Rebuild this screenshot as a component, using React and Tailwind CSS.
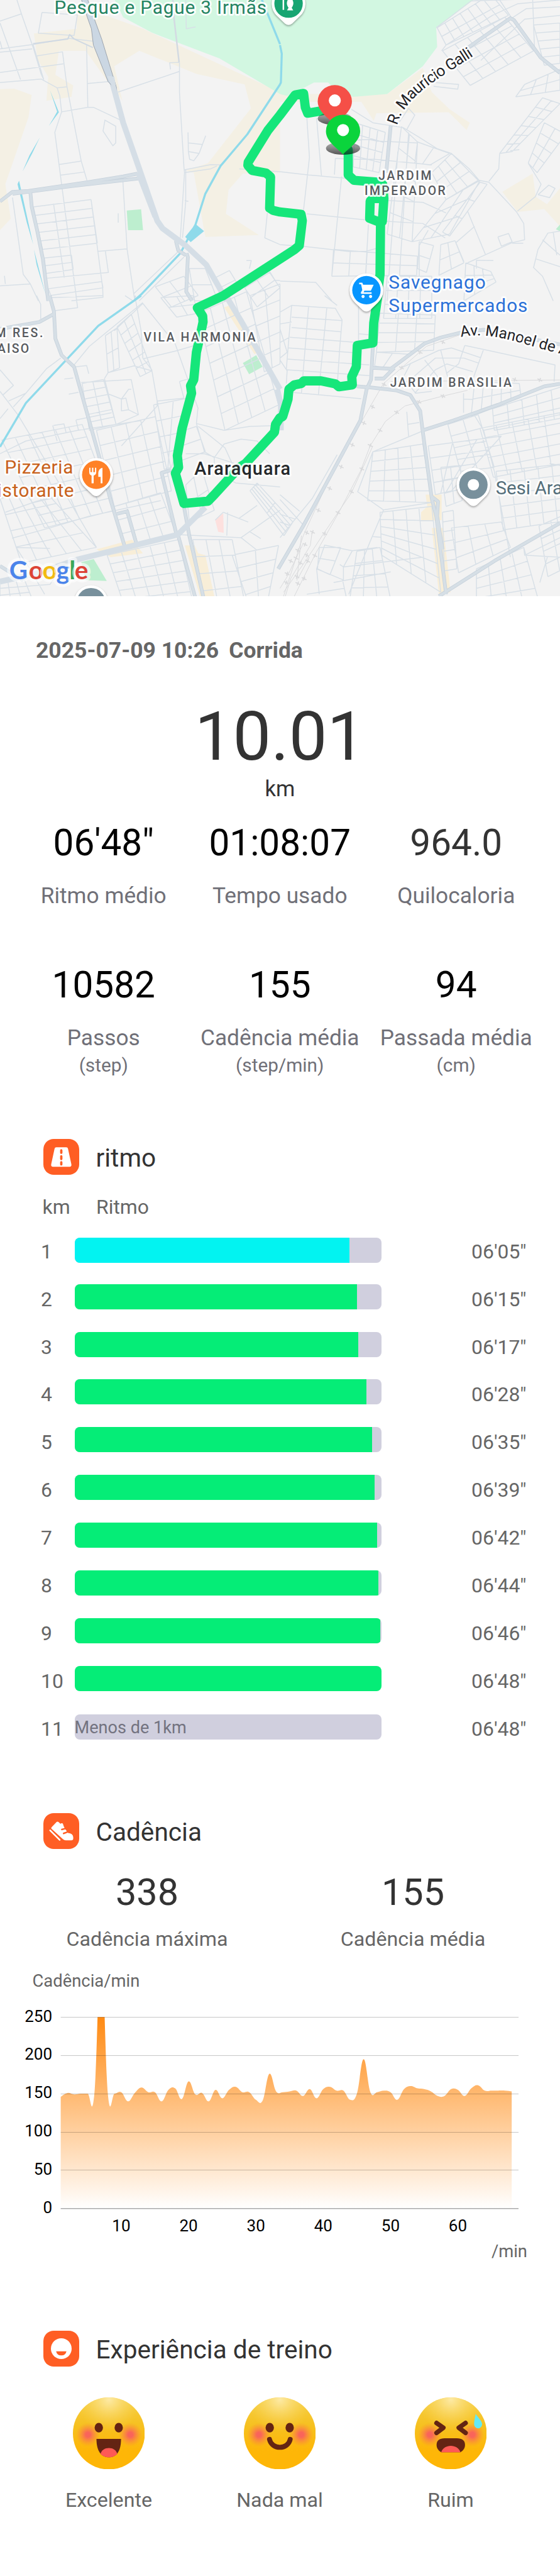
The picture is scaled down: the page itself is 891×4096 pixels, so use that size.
import React from "react";

/* ---------- map geometry ---------- */

// The map is described in four quadrants, each with its own local grid.
const QUADS = {
  a: [0, 0, 0.34439, 0.3699],
  b: [540, 0, 0.34439, 0.3699],
  c: [0, 570, 0.34439, 0.37628],
  d: [540, 570, 0.34439, 0.37628],
};

const toMap = (q, x, y) => {
  const [ox, oy, sx, sy] = QUADS[q];
  return [+(ox + x * sx).toFixed(1), +(oy + y * sy).toFixed(1)];
};

const points = (q, text) =>
  text
    .trim()
    .split(/\s+/)
    .map((p) => {
      const [x, y] = p.split(",").map(Number);
      return toMap(q, x, y).join(",");
    })
    .join(" L");

const line = (q, text) => "M" + points(q, text);
const lines = (q, list) => list.map((t) => line(q, t)).join(" ");

// Street block: p0 top-left, p1 top-right, p2 bottom-right, p3 bottom-left.
const grid = (q, [x0, y0, x1, y1, x2, y2, x3, y3], cols, rows) => {
  const at = (u, v) =>
    toMap(
      q,
      (1 - v) * ((1 - u) * x0 + u * x1) + v * ((1 - u) * x3 + u * x2),
      (1 - v) * ((1 - u) * y0 + u * y1) + v * ((1 - u) * y3 + u * y2)
    ).join(",");
  let d = "";
  for (let i = 0; i <= cols; i++) d += `M${at(i / cols, 0)} L${at(i / cols, 1)} `;
  for (let j = 0; j <= rows; j++) d += `M${at(0, j / rows)} L${at(1, j / rows)} `;
  return d;
};

const STREETS = [
  lines("a", [
    "0,110 120,72 95,0",
    "120,72 185,245 230,385 245,415",
    "235,65 433,78 415,185 215,173 235,65",
    "0,120 115,415",
    "0,215 12,255",
    "0,255 185,232 385,200 520,215",
    "0,272 180,255",
    "0,378 355,333",
    "0,430 230,412 320,458 375,452",
    "185,232 245,415",
    "205,292 350,270 375,450 455,840 487,940",
    "485,235 492,560",
    "492,435 607,425",
    "345,583 490,560 525,560 680,628",
    "320,458 335,500 345,583 307,690 345,960 430,1568",
    "333,857 452,840",
    "340,913 470,897",
    "585,625 648,658 648,745 632,760 577,683 588,625",
    "660,480 1003,373",
    "955,362 950,327 1003,325",
    "1005,325 1005,480 1030,870 1033,900 1010,1240",
    "1040,885 1040,1050 1022,1240",
    "1033,885 1180,858 1240,860",
    "1033,900 1180,880 1215,865",
    "1340,880 1568,895",
    "1053,690 1055,790 1062,830 1085,838 1115,800 1152,707",
    "1055,745 1132,753",
    "1055,790 1115,800",
    "1035,1045 1055,1050",
    "688,940 712,1300 755,1568",
    "545,1310 710,1297",
    "590,1310 607,1420 265,1450",
    "70,1030 130,1430 170,1480 215,1568",
    "0,1490 170,1480",
    "25,1438 30,1480",
    "662,1112 662,1160",
    "1000,1310 750,1530",
    "1030,1340 780,1568",
    "1040,0 1043,150 1095,140",
    "1497,1110 1483,1240 1568,1275",
    "1380,1358 1407,1358 1397,1400",
    "1510,1415 1540,1460 1568,1462",
    "510,1040 575,1500 577,1550 400,1568",
    "300,1062 360,1448",
  ]),
  grid("a", [187, 1078, 510, 1040, 545, 1268, 238, 1300], 1, 5),
  grid("a", [248, 1345, 400, 1330, 410, 1405, 258, 1425], 1, 2),
  grid("a", [270, 1505, 570, 1468, 577, 1500, 285, 1540], 1, 1),
  grid("a", [1060, 1400, 1150, 1400, 1220, 1568, 1090, 1568], 1, 2),
  grid("a", [870, 1495, 1030, 1440, 1110, 1540, 960, 1600], 2, 2),
  grid("a", [1190, 1455, 1285, 1410, 1350, 1510, 1250, 1555], 1, 2),
  grid("a", [1370, 1500, 1510, 1420, 1568, 1500, 1440, 1600], 2, 2),
  grid("b", [880, 145, 1180, -30, 1280, 80, 930, 235], 7, 2),
  grid("b", [910, 265, 1260, 90, 1420, 265, 1065, 445], 5, 4),
  grid("b", [1420, 130, 1568, 120, 1568, 330, 1480, 340], 1, 5),
  grid("b", [420, 640, 590, 690, 555, 900, 410, 870], 4, 4),
  grid("b", [680, 660, 770, 740, 740, 1260, 600, 1220], 2, 5),
  grid("b", [770, 740, 950, 800, 840, 860, 755, 850], 2, 1),
  grid("b", [850, 900, 960, 800, 1110, 940, 930, 1040], 3, 3),
  grid("b", [930, 1040, 1120, 940, 950, 1220, 740, 1260], 2, 3),
  grid("b", [1120, 950, 1160, 960, 950, 1230, 910, 1210], 1, 3),
  grid("b", [300, 1300, 770, 1335, 765, 1435, 290, 1440], 5, 2),
  grid("b", [780, 1260, 860, 1280, 820, 1420, 770, 1400], 1, 2),
  grid("b", [900, 1275, 980, 1255, 1030, 1370, 890, 1435], 2, 2),
  grid("b", [1040, 1370, 1180, 1415, 1210, 1470, 1030, 1568], 3, 3),
  grid("b", [600, 1440, 850, 1440, 850, 1660, 580, 1660], 4, 3),
  grid("b", [1370, 440, 1568, 360, 1568, 470, 1320, 505], 3, 2),
  grid("b", [1470, 510, 1568, 540, 1300, 790, 1230, 800], 2, 6),
  grid("b", [1480, 640, 1600, 700, 1440, 900, 1390, 850], 2, 4),
  lines("b", [
    "875,145 1070,5 1568,-10",
    "905,265 930,235 1190,80 1330,20 1568,0",
    "1060,240 1380,45 1568,35",
    "1230,0 1295,90",
    "1415,0 1425,250",
    "1125,315 1370,100 1568,80",
    "860,450 995,465 1000,440 870,430",
    "1065,445 1420,265",
    "400,570 520,640 690,665 770,710 880,775 960,800 1060,880 1115,940 1170,950",
    "650,660 720,565 755,600 710,675",
    "410,730 500,727 540,735 770,745",
    "150,610 165,820 130,1110",
    "205,615 232,915",
    "0,895 160,912 380,930",
    "310,825 400,830 530,830 850,860",
    "345,920 290,1440",
    "495,1170 480,1420",
    "310,825 305,910",
    "150,1115 500,1148 800,1165 925,1240",
    "600,1045 800,1055 930,1110",
    "660,790 600,1568",
    "720,690 670,1420",
    "0,1275 140,1285 380,1310 480,1310 540,1295",
    "0,1465 200,1472 290,1568",
    "1170,950 1325,1105 1365,1165 1370,1250 1300,1265 1050,1370",
    "1220,1235 1280,1217 1300,1260 1240,1283 1220,1235",
    "1300,1268 1362,1268",
    "1330,1100 1430,1025 1462,960 1390,850",
    "1445,1015 1505,965 1540,982 1510,1030 1445,1015",
    "1230,800 1225,880 1170,945",
    "1050,1100 1150,1325",
    "1090,1180 985,1265 1030,1365",
    "1568,1205 1500,1215 1445,1300 1420,1395 1470,1440 1530,1568",
    "1470,1250 1568,1330",
    "1435,1350 1568,1390",
    "1530,1210 1550,1330",
    "1100,1400 1100,1357 1195,1358",
    "1290,785 1340,780",
    "780,1440 780,1280 830,1200",
  ]),
  lines("c", [
    "205,0 228,45 228,120",
    "290,10 578,0",
    "300,78 435,62 425,0",
    "755,0 790,180 800,320 850,380 880,540 960,900",
    "800,35 500,260 415,355",
    "640,180 800,40 980,245 1110,580",
    "340,320 260,375 145,500 75,570",
    "0,380 75,460 15,510",
    "0,490 100,610 330,960 540,1290",
    "48,540 145,500",
    "0,630 45,580",
    "360,427 410,422",
    "425,365 485,358 497,400",
    "385,505 440,495",
    "455,445 735,430 775,610 650,660",
    "585,425 605,395 750,360 850,385",
    "585,425 650,660",
    "610,505 680,530 720,480 735,480",
    "680,530 705,525 720,585 680,590 680,530",
    "720,585 775,610",
    "425,637 440,690",
    "425,637 625,600",
    "300,665 358,657 370,700",
    "295,665 320,745",
    "0,810 145,745 435,690 790,640",
    "680,770 880,565 880,540 1030,525",
    "805,323 985,283 1110,250",
    "700,0 750,30 760,0",
    "1005,440 1080,420",
    "1005,440 1030,525",
    "1108,580 1100,655 1255,690 1400,670 1568,665",
    "1100,655 1145,800 1200,830 1255,760 1350,735 1440,745 1510,810",
    "1110,670 1260,780 1300,860",
    "1040,810 1145,810 1350,870",
    "1200,830 1200,900 1320,960 1568,980",
    "68,1243 280,1190 500,1130 900,1050",
    "30,1110 200,1055 420,1000",
    "90,1290 280,1295",
    "90,1290 160,1390 250,1530",
    "0,1500 280,1480 360,1370",
    "1010,1225 1350,1240 1568,1100",
    "1350,1240 1440,1305",
    "1250,1110 1390,1160",
    "1250,1110 1205,1150",
    "1275,1110 1270,1230",
    "1340,1140 1440,1075",
    "1400,1210 1460,1245",
  ]),
  grid("c", [655, 160, 735, 95, 850, 385, 785, 415], 2, 6),
  grid("c", [590, 205, 655, 165, 670, 370, 605, 395], 2, 2),
  grid("c", [460, 450, 580, 430, 650, 660, 500, 690], 2, 6),
  grid("c", [10, 740, 460, 660, 640, 1100, 250, 1190], 6, 7),
  grid("c", [0, 1040, 240, 990, 540, 1290, 120, 1370], 5, 4),
  grid("c", [540, 690, 870, 620, 960, 1000, 640, 1080], 4, 5),
  grid("c", [860, 560, 1080, 520, 960, 880, 920, 890], 2, 4),
  grid("c", [640, 1080, 900, 1010, 990, 1230, 700, 1290], 4, 3),
  grid("c", [600, 1330, 1000, 1250, 1080, 1570, 700, 1600], 5, 6),
  grid("c", [1110, 90, 1380, -20, 1560, 560, 1260, 690], 4, 7),
  grid("c", [900, 10, 1080, 0, 1110, 90, 990, 110], 2, 2),
  grid("c", [1400, 0, 1568, -60, 1568, 350, 1480, 390], 2, 5),
  grid("c", [1080, 1250, 1300, 1250, 1370, 1570, 1150, 1600], 3, 4),
  grid("c", [1300, 1330, 1560, 1280, 1500, 1560, 1400, 1600], 2, 4),
  grid("c", [1400, 1000, 1440, 960, 1640, 1160, 1590, 1230], 4, 2),
  grid("c", [1000, 700, 1100, 670, 1150, 800, 1000, 850], 1, 2),
  grid("c", [1040, 970, 1130, 890, 1200, 1100, 1060, 1160], 2, 2),
  grid("c", [0, 1470, 130, 1440, 200, 1600, 0, 1600], 3, 2),
  lines("d", [
    "0,85 65,50 230,60 310,65 348,125 335,260 320,470",
    "65,50 35,380",
    "160,55 120,500",
    "262,65 215,510",
    "65,110 348,128",
    "65,163 340,185",
    "55,213 430,240",
    "48,268 410,292",
    "43,325 500,355",
    "38,380 500,410",
    "60,495 455,528",
    "0,145 65,135",
    "0,240 50,215",
    "0,170 40,290 0,320",
    "0,330 40,385 35,450",
    "440,40 440,230",
    "440,195 495,200",
    "320,50 250,0",
    "1035,255 1540,355 1535,440",
    "1035,255 1000,350 930,400",
    "1140,275 1060,480",
    "680,370 890,280 960,268 1125,318",
    "705,450 870,320 1030,320 1110,345",
    "755,500 870,380 935,350 1080,390",
    "810,330 905,440",
    "730,350 690,420 760,500 850,490",
    "900,280 940,420",
    "710,595 720,720",
    "715,660 780,650",
    "795,695 520,800 435,1005 580,1098 505,1260 385,1530",
    "580,1098 850,1060",
    "205,1400 250,1278 405,1307 545,1290",
    "205,1400 220,1530",
    "205,1400 350,1455 370,1540",
    "355,1390 405,1307",
    "335,1378 355,1390 355,1460",
    "355,1390 800,1340",
    "300,1470 620,1415",
    "1028,600 1028,500",
    "1028,530 1080,532",
    "1080,600 1140,690 1200,900 1290,1340",
    "1140,690 1568,610",
    "520,1235 565,1238",
    "0,1020 110,1105",
    "0,1045 130,1175",
    "0,1240 180,1040 320,815",
    "0,1160 60,1180",
    "0,1120 85,1145",
    "1365,1290 1370,1330 1568,1340",
    "1370,1330 1568,1240",
    "1497,1340 1455,1470",
    "150,1530 360,1500",
    "1568,870 1510,860",
  ]),
  grid("d", [560, 90, 870, 100, 860, 280, 540, 290], 3, 4),
  grid("d", [540, 290, 720, 300, 620, 380, 530, 360], 2, 1),
  grid("d", [520, 800, 800, 760, 850, 1060, 490, 1050], 4, 5),
  grid("d", [830, 770, 1240, 720, 960, 1000, 870, 1020], 3, 4),
  grid("d", [560, 1110, 850, 1080, 900, 1520, 570, 1330], 4, 6),
  grid("d", [430, 1310, 560, 1290, 620, 1560, 390, 1560], 3, 4),
  grid("d", [940, 660, 1110, 610, 1200, 880, 1010, 900], 2, 4),
  grid("d", [1120, 680, 1568, 600, 1600, 860, 1195, 930], 5, 5),
  grid("d", [1190, 580, 1600, 460, 1620, 620, 1200, 690], 5, 3),
  grid("d", [1090, 440, 1340, 450, 1350, 520, 1070, 620], 5, 2),
  grid("d", [1210, 900, 1600, 860, 1630, 1150, 1250, 1200], 5, 5),
  grid("d", [900, 880, 1010, 870, 1020, 1050, 930, 1080], 2, 3),
  grid("d", [910, 1110, 970, 1100, 990, 1400, 920, 1410], 1, 6),
  grid("d", [960, 1190, 1240, 1160, 1290, 1290, 1000, 1420], 3, 3),
  grid("d", [1100, 1400, 1365, 1290, 1450, 1570, 1100, 1600], 4, 4),
  grid("d", [1450, 1180, 1650, 1100, 1700, 1350, 1500, 1440], 3, 4),
  grid("d", [220, 1290, 340, 1290, 280, 1430, 210, 1400], 1, 2),
];

const ROADS_MEDIUM = [
  lines("a", [
    "170,1000 178,1080 208,1200 240,1350 270,1568",
    "0,1050 70,1000 160,995 490,950 690,920 770,905",
    "70,1010 400,970 780,930",
    "985,1255 998,1305 1040,1330",
    "1045,1320 1052,1340 1043,1520 1075,1568",
  ]),
  lines("b", ["1050,250 1290,95 1310,105 1460,300 1568,380", "620,655 595,900"]),
  lines("c", [
    "278,0 302,80 310,220 345,305 415,365 560,840 620,1050 700,1290",
    "0,170 130,150 220,135 300,95",
    "655,1118 712,1105 765,1275",
    "990,1230 905,908 955,895",
    "995,1220 1100,1568",
    "1030,1080 1060,1230 1145,1568",
    "0,1385 130,1460",
  ]),
  lines("d", [
    "520,260 510,430 485,480 450,640 320,860 130,1180 -10,1400",
    "430,465 500,470 650,485 730,510 785,590 800,700 850,1040 875,1130 930,1530",
    "520,370 620,375 810,245 900,215 1010,190 1140,175 1568,250",
    "530,425 580,425 640,370",
    "800,690 970,640 1220,560 1480,465 1568,452",
    "850,1030 885,1055 880,1130 910,1300",
    "890,1540 1200,1360 1568,1165",
  ]),
].join(" ");

const ROADS_MAJOR = [
  line("a", "620,400 690,640 780,880 880,1150 910,1190 1040,1280 1155,1380 1270,1568"),
  line("a", "775,900 870,1130"),
  line("c", "1265,0 1350,130 1450,290 1568,480"),
  line("c", "0,1465 200,1425 440,1350 995,1225 1150,1085"),
  line("d", "-15,480 5,560 5,690"),
].join(" ");

const RIVER = [
  line("a", "1465,-5 1568,230"),
  line("b", "0,235 10,280 5,430 0,440"),
  line("a", "1568,440 1385,700 1235,865 1150,1010 1095,1170 1010,1320 790,1535 750,1568"),
  line("c", "790,0 550,155 370,330 145,550 0,775"),
].join(" ");

const FARMLAND = [
  line("a", "430,60 530,60 800,150 1568,480 1568,900 1360,905 1280,990 1265,1115 1450,1225 1150,1235 1085,900 1040,890 1165,850 1405,565 1370,440 1100,385 780,265 640,345 685,525 655,480 600,420 480,265 330,265 310,390 410,445 400,505 260,525 270,400 210,310 190,175 430,150"),
  line("a", "0,465 80,462 177,495 160,610 30,960 60,1140 0,1200"),
  line("b", "0,490 600,490 800,355 850,480 950,570 1063,640 1045,678 945,585 540,590 525,630 455,530 0,530"),
  line("b", "1245,1000 1415,905 1432,1025 1495,1065 1568,980 1568,1180 1480,1090 1330,1105"),
].join("Z ") + "Z";

const FOREST =
  line("a", "640,-5 690,90 850,170 1230,305 1568,490") +
  " L" +
  points("b", "40,500 150,450 190,430 270,430 310,470 410,505 600,490 800,345 880,245 875,145 1090,-5") +
  "Z";

const SHOPS = [
  line("c", "1255,60 1300,45 1465,280 1425,300"),
  line("c", "540,1300 740,1250 800,1320 620,1340"),
  line("c", "1035,1280 1090,1280 1110,1320 1150,1330 1200,1540 1120,1540"),
  line("d", "815,1020 905,1020 905,1150 790,1155 790,1110 825,1080"),
  line("d", "850,1190 915,1190 955,1520 890,1530"),
].join("Z ") + "Z";

const PARKS = [
  line("a", "710,1097 790,1091 801,1200 717,1200"),
  line("c", "1360,345 1435,305 1470,365 1395,403"),
  line("c", "455,1365 525,1350 598,1462 480,1458"),
  line("b", "1545,1195 1568,1170 1568,1205"),
].join("Z ") + "Z";

const POND = line("a", "1095,1168 1143,1205 1068,1262 1037,1235") + "Z";

const CREEKS = [
  line("a", "280,470 330,585 273,657 300,615 320,582"),
  line("a", "223,716 165,810 126,894 180,800"),
  line("a", "107,942 186,1275 150,1160 98,960"),
  line("a", "190,1300 255,1535 205,1380"),
].join("Z ") + "Z";

const RAILS = lines("d", [
  "1010,200 820,260 580,450 460,640 260,970 130,1230 20,1540",
  "1050,485 910,515 700,565 590,645 505,770 450,900 330,1110 200,1320 80,1540",
  "520,770 400,1010 240,1225 150,1350 20,1520",
  "130,1270 40,1440 0,1500",
  "180,1210 170,1280 60,1450 30,1540",
  "165,1340 100,1450",
  "120,1230 95,1460",
  "620,440 1568,432",
]);

const SLEEPERS = [
  [912, 238], [785, 290], [680, 370], [583, 455], [518, 570], [470, 653], [405, 765], [343, 877], [278, 988],
  [215, 1100], [150, 1215], [778, 545], [912, 515], [653, 598], [560, 690], [505, 768], [458, 888], [400, 1005],
  [325, 1112], [250, 1220], [182, 1212], [140, 1275], [100, 1305], [150, 1330], [195, 1332], [60, 1360], [90, 1345],
  [155, 1360], [115, 1370], [40, 1425], [95, 1440], [135, 1450], [35, 1470], [100, 1475], [1315, 430], [1455, 432],
]
  .map(([x, y]) => line("d", `${x - 13},${y - 6} ${x + 13},${y + 6} ${x},${y} ${x + 4},${y - 10} ${x - 4},${y + 10}`))
  .join(" ");

const ROUTE =
  "M" +
  [
    points("b", "250,575 155,590 142,560 132,487 85,495 0,600"),
    points("a", "1500,680 1390,845 1388,862 1412,888 1490,902 1515,922 1510,1085 1530,1097"),
    points("b", "0,1105 118,1117 125,1150 108,1280 80,1302 0,1350"),
    points("c", "1250,0 1105,62 1135,105 1137,135 1122,200 1100,290 1085,430 1067,462 1073,500 1020,680 993,820 1000,880 982,910 1030,1065 1165,1053 1200,1020 1340,880 1375,860 1537,700 1543,660 1568,625"),
    points("d", "15,620 45,530 50,480 80,457 120,450 132,437 230,437 310,452 330,467 405,457 402,415 427,365 433,255 520,242 525,140 548,0"),
    points("b", "548,1520 560,1430 563,1160 502,1138 505,1048 522,1035 582,1035 573,1155 582,1035 575,960 555,950 415,940 382,912 382,780"),
  ].join(" L");

/* ---------- map pieces ---------- */

function FlagPin({ x, y, color }) {
  return (
    <g transform={`translate(${x} ${y})`}>
      <ellipse cx="0" cy="32" rx="33" ry="12.5" fill="url(#pinShade)" />
      <path d="M0 44 C-8 34 -33 20 -33 -1 A33 31.5 0 0 1 33 -1 C33 20 8 34 0 44Z" fill={color} />
      <circle cx="0" cy="-3" r="11.6" fill="#fff" />
    </g>
  );
}

function PlacePin({ x, y, color, children }) {
  return (
    <g transform={`translate(${x} ${y})`}>
      <path
        d="M-22 24 A32.5 32.5 0 1 1 22 24 L7 38.5 Q0 44 -7 38.5Z"
        fill="#fff"
        style={{ filter: "drop-shadow(0 2px 2px rgba(0,0,0,.35))" }}
      />
      <circle r="27.4" fill={color} />
      {children}
    </g>
  );
}

function Halo({ children, ...rest }) {
  return (
    <text
      stroke="#ffffff"
      strokeWidth="7"
      strokeOpacity="0.9"
      strokeLinejoin="round"
      style={{ paintOrder: "stroke" }}
      {...rest}
    >
      {children}
    </text>
  );
}

function RouteMap() {
  return (
    <svg className="block h-[948px] w-full" viewBox="0 0 1080 1149.5" preserveAspectRatio="none" fontFamily="Roboto, sans-serif">
      <defs>
        <linearGradient id="pinShade" x1="0" y1="0" x2="0" y2="1">
          <stop offset="0" stopColor="#000" stopOpacity="0.25" />
          <stop offset="1" stopColor="#000" stopOpacity="0.65" />
        </linearGradient>
        <path id="galli" d="M766 242 C773 213 799 184 830 162 S880 130 925 100" />
        <path id="manoel" d="M889 650 C930 641 975 652 1025 667 S1080 680 1130 696" />
      </defs>
      <rect width="1080" height="1150" fill="#f3f3f3" />
      <path d={FARMLAND} fill="#f4f0e4" />
      <path d={FOREST} fill="#d2f7e1" />
      <path d={SHOPS} fill="#f8eed8" />
      <path d={PARKS} fill="#bdeecf" />
      <path d={line("c", "1205,1150 1250,1115 1253,1215 1222,1210") + "Z"} fill="#fde0de" />
      <g fill="none" stroke="#d8e0e7" strokeLinejoin="round">
        <path d={STREETS.join(" ")} strokeWidth="1.8" />
        <path d={line("a", "968,0 975,100 1003,325")} strokeWidth="3" stroke="#d3dae2" />
        <path d={line("a", "185,228 380,203 390,180 415,203 520,248")} strokeWidth="2.4" stroke="#d0d9e3" />
      </g>
      <g fill="none" stroke="#d9dadc" strokeWidth="1.2">
        <path d={RAILS} />
        <path d={SLEEPERS} strokeWidth="2" />
      </g>
      <path d={RIVER} fill="none" stroke="#8fdaea" strokeWidth="4" strokeLinejoin="round" />
      <path d={POND} fill="#8fdaea" />
      <path d={CREEKS} fill="#8fdaea" />
      <g fill="none" strokeLinejoin="round">
        <path d={ROADS_MEDIUM} stroke="#c6d1db" strokeWidth="7" />
        <path d={ROADS_MEDIUM} stroke="#d6dfe6" strokeWidth="5" />
        <path d={ROADS_MAJOR} stroke="#d5dee6" strokeWidth="11" />
      </g>
      <path
        d={line("a", "455,-5 487,85 512,150 523,235 605,425 650,470 652,455 570,205 525,90 490,-5") + "Z"}
        fill="#cbd7e3"
        stroke="#8f98a3"
        strokeWidth="1"
      />
      <path d={line("a", "600,395 640,480 668,560 640,400") + "Z"} fill="#d5dee6" />

      <path d={ROUTE} fill="none" stroke="#16e67a" strokeWidth="17.8" strokeLinejoin="round" strokeLinecap="round" />

      <g fontWeight="500" fontSize="23.5" fill="#56595d">
        <Halo x="730" y="347" textLength="102">JARDIM</Halo>
        <Halo x="703" y="376" textLength="156">IMPERADOR</Halo>
        <Halo x="277" y="659" textLength="216">VILA HARMONIA</Halo>
        <Halo x="752.5" y="746" textLength="234">JARDIM BRASILIA</Halo>
        <Halo x="-9" y="650.5" textLength="92">M RES.</Halo>
        <Halo x="-5" y="680" textLength="61">AISO</Halo>
      </g>
      <g fill="#1f2226">
        <Halo fontSize="30">
          <textPath href="#galli" textLength="204">R. Maurício Galli</textPath>
        </Halo>
        <Halo fontSize="29.5">
          <textPath href="#manoel">Av. Manoel de Abreu</textPath>
        </Halo>
      </g>

      <FlagPin x={645.7} y={196.6} color="#f54f47" />
      <FlagPin x={661.6} y={253.8} color="#0bd43c" />

      <PlacePin x={556.5} y={7} color="#18a572">
        <path d="M-10 -10V12" stroke="#fff" strokeWidth="3" />
        <path d="M3 -12 C9 -8 12 0 6 8 L9 13 H-3 L0 8 C-6 0 -3 -8 3 -12Z" fill="#fff" />
      </PlacePin>
      <PlacePin x={706.7} y={559.5} color="#0896ff">
        <path d="M-14 -14.5 h6 l1.6 4 H14 l-5.5 11.5 H-4 l-1.5 3 H10 v3.2 H-9 q-3 -1.2 -1 -4.2 l2 -3.2 L-10.3 -11.3 H-14Z" fill="#fff" />
        <circle cx="-6.5" cy="12.3" r="3" fill="#fff" />
        <circle cx="8" cy="12.3" r="3" fill="#fff" />
      </PlacePin>
      <PlacePin x={185.6} y={915.4} color="#ff8127">
        <path
          d="M-13.5 -13.5 V-5 Q-13.5 0 -9 1.5 V16.5 H-5 V1.5 Q0 0 0 -5 V-13.5 H-2.4 V-5 H-5.6 V-13.5 H-8.2 V-5 H-11.2 V-13.5Z M12 -13.5 V16.5 H8.5 V4 H4 V-4 Q5 -12 12 -13.5Z"
          fill="#fff"
        />
      </PlacePin>
      <PlacePin x={913} y={934.6} color="#78909c">
        <circle r="11" fill="#fff" />
      </PlacePin>
      <PlacePin x={175.6} y={1161} color="#78909c" />

      <g fontSize="36">
        <Halo x="105" y="26.5" fill="#258462" textLength="409">Pesque e Pague 3 Irmãs</Halo>
        <Halo x="749.5" y="557" fill="#2b71d8" textLength="187">Savegnago</Halo>
        <Halo x="749.5" y="602" fill="#2b71d8" textLength="268">Supermercados</Halo>
        <Halo x="9" y="912.5" fill="#c8611b" textLength="132">Pizzeria</Halo>
        <Halo x="-5.5" y="957.5" fill="#c8611b" textLength="148">istorante</Halo>
        <Halo x="956" y="953.5" fill="#546e7a" textLength="249">Sesi Araraquara</Halo>
        <Halo x="375" y="916" fill="#25282b" fontWeight="500" fontSize="35" textLength="185">Araraquara</Halo>
      </g>

      <g fontFamily="Lato, sans-serif" fontSize="49" fontWeight="700">
        <Halo x="18 55.5 81.8 108.5 133.5 144" y="1116.5" strokeWidth="12" strokeOpacity="0.6" fill="#4b84ea">
          <tspan>G</tspan>
          <tspan fill="#dc4437">o</tspan>
          <tspan fill="#f2bb12">o</tspan>
          <tspan>g</tspan>
          <tspan fill="#3da658">l</tspan>
          <tspan fill="#dc4437">e</tspan>
        </Halo>
      </g>
    </svg>
  );
}

/* ---------- summary ---------- */

function Stat({ value, label, unit, tone = "text-black" }) {
  return (
    <div className="flex flex-col items-center whitespace-nowrap">
      <div className={`h-[70px] text-[58.5px] leading-[70px] ${tone}`}>{value}</div>
      <div className="mt-[27px] h-[44px] text-[35.3px] leading-[44px] text-[#707078]">{label}</div>
      {unit && <div className="mt-1 h-[36px] text-[29.8px] leading-[36px] text-[#707078]">{unit}</div>}
    </div>
  );
}

function SectionTitle({ icon, children }) {
  return (
    <div className="flex h-[57px] items-start pl-[69px]">
      <svg className="block size-[57px]" viewBox="0 0 69 69">
        <rect width="69" height="69" rx="20" fill="#ff5e24" />
        {icon}
      </svg>
      <h2 className="ml-[26.5px] text-[40.6px] leading-[60px] text-[#333]">{children}</h2>
    </div>
  );
}

const roadIcon = (
  <g>
    <path d="M25 16 H44 Q47 16 47.5 19 L54 49 Q54.5 53.5 50.5 53.5 H18.5 Q14.5 53.5 15 49 L21.5 19 Q22 16 25 16Z" fill="#fff" />
    <path d="M34.5 22v4.5 M34.5 33.5v5 M34.5 45v4" stroke="#ff5e24" strokeWidth="4.5" strokeLinecap="round" />
  </g>
);

const shoeIcon = (
  <g>
    <path
      d="M16 27 L25.5 17 Q27 15.5 29 17 L33 20.5 Q35 18.5 37.5 20 L39.5 26 L42 30.5 L47.5 38 Q57 39 57.5 46 V50 Q57 52.5 54 52.5 H43 Q40 52.5 37.5 50 L15.5 30 Q14.5 28.5 16 27Z"
      fill="#fff"
    />
    <path d="M13 33 L31.5 51.5" stroke="#fff" strokeWidth="3" strokeLinecap="round" />
    <path d="M35.5 31.5 L43 29.5 M39 39 L46 36.5" stroke="#ff5e24" strokeWidth="3" strokeLinecap="round" />
  </g>
);

const smileIcon = (
  <g>
    <circle cx="34.5" cy="34.5" r="20" fill="#fff" />
    <path d="M24.5 39.5 H44.5 Q42.5 47.5 34.5 47.5 T24.5 39.5Z" fill="#ff5e24" />
  </g>
);

/* ---------- pace ---------- */

const SPLITS = [
  ["1", "06'05\""],
  ["2", "06'15\""],
  ["3", "06'17\""],
  ["4", "06'28\""],
  ["5", "06'35\""],
  ["6", "06'39\""],
  ["7", "06'42\""],
  ["8", "06'44\""],
  ["9", "06'46\""],
  ["10", "06'48\""],
  ["11", "06'48\"", "Menos de 1km"],
];
const SLOWEST = 408;
const seconds = (pace) => Number(pace.slice(0, 2)) * 60 + Number(pace.slice(3, 5));

function SplitRow({ km, pace, note, first }) {
  return (
    <div className="flex h-[75.9px] items-start pl-[65px] text-[31.9px] leading-[40px] text-[#666]">
      <div className="mt-[30.8px] w-[53.6px]">{km}</div>
      <div
        className={`${first ? "mt-[28.8px]" : note ? "mt-[28.2px]" : "mt-[26.8px]"} h-[40px] w-[488.5px] overflow-hidden rounded-[8px] bg-[#d0cfde]`}
      >
        {note ? (
          <div className="text-[27.1px] leading-[42px] text-[#737380]">{note}</div>
        ) : (
          <div
            className={`h-full ${first ? "bg-[#02f3f1]" : "bg-[#05ed77]"}`}
            style={{ width: `${(seconds(pace) / SLOWEST) * 100}%` }}
          />
        )}
      </div>
      <div className="mt-[30.8px] ml-[143px]">{pace}</div>
    </div>
  );
}

/* ---------- cadence chart ---------- */

const CADENCE = [
  146, 151, 149, 150, 150, 150, 338, 150, 150, 152, 140, 151, 158, 152, 152, 140, 155, 157, 143, 166, 149, 151, 140,
  155, 144, 155, 159, 152, 152, 142, 141, 176, 153, 152, 153, 154, 147, 156, 144, 156, 159, 154, 154, 142, 150, 195,
  152, 152, 154, 152, 142, 156, 160, 157, 156, 153, 147, 147, 156, 155, 147, 157, 161, 154, 154, 154, 154, 153,
];
const X0 = 96.6;
const XSTEP = 10.71;
const Y0 = 343.8;
const YUNIT = 1.218;

const curve = () => {
  const p = CADENCE.map((v, i) => [X0 + i * XSTEP, Y0 - v * YUNIT]);
  const at = (i) => p[Math.max(0, Math.min(p.length - 1, i))];
  let d = `M${X0} ${Y0} L${p[0][0]} ${p[0][1]}`;
  for (let i = 1; i < p.length; i++) {
    const [pp, a, b, n] = [at(i - 2), at(i - 1), at(i), at(i + 1)];
    const k = 0.2;
    d += ` C${a[0] + (b[0] - pp[0]) * k} ${a[1] + (b[1] - pp[1]) * k} ${b[0] - (n[0] - a[0]) * k} ${b[1] - (n[1] - a[1]) * k} ${b[0]} ${b[1]}`;
  }
  return d + ` L${p[p.length - 1][0]} ${Y0}Z`;
};

function CadenceChart() {
  return (
    <svg className="block h-[440px] w-full" viewBox="0 0 891 440" fontFamily="Roboto, sans-serif" fontSize="26">
      <defs>
        <linearGradient id="cadFill" gradientUnits="userSpaceOnUse" x1="0" y1="39.3" x2="0" y2="343.8">
          <stop offset="0" stopColor="#ff8a12" />
          <stop offset="1" stopColor="#ffffff" />
        </linearGradient>
        <clipPath id="cadClip">
          <rect x="90" y="39.3" width="740" height="310" />
        </clipPath>
      </defs>
      <path d={curve()} fill="url(#cadFill)" clipPath="url(#cadClip)" />
      {[250, 200, 150, 100, 50].map((v) => (
        <path key={v} d={`M${X0} ${Math.floor(Y0 - v * YUNIT) + 0.5}H825`} stroke="#000" strokeOpacity="0.22" strokeWidth="1" />
      ))}
      <path d={`M${X0} 343.8H825`} stroke="#a9a9a9" strokeWidth="1.5" />
      {[250, 200, 150, 100, 50, 0].map((v) => (
        <text key={v} x="83" y={Y0 - v * YUNIT + 7.2} textAnchor="end">
          {v}
        </text>
      ))}
      {[10, 20, 30, 40, 50, 60].map((v) => (
        <text key={v} x={X0 + (v - 1) * XSTEP} y="380" textAnchor="middle">
          {v}
        </text>
      ))}
      <text x="839" y="420.5" textAnchor="end" fill="#666" fontSize="27.4">
        /min
      </text>
    </svg>
  );
}

/* ---------- feeling ---------- */

function Face({ id, children }) {
  return (
    <svg className="block size-[114.5px]" viewBox="0 0 139 139">
      <defs>
        <linearGradient id={`${id}b`} x1="0" y1="0" x2="0" y2="1">
          <stop offset="0" stopColor="#f6cf45" />
          <stop offset="0.4" stopColor="#f6c01f" />
          <stop offset="0.75" stopColor="#feb607" />
        </linearGradient>
        <radialGradient id={`${id}h`} cx="0.5" cy="0.03" r="0.45">
          <stop offset="0" stopColor="#fdeaa6" />
          <stop offset="1" stopColor="#f9d456" stopOpacity="0" />
        </radialGradient>
        <radialGradient id={`${id}c`}>
          <stop offset="0.2" stopColor="#f9645a" />
          <stop offset="1" stopColor="#fb8a3a" stopOpacity="0" />
        </radialGradient>
        <clipPath id={`${id}k`}>
          <circle cx="69.5" cy="69.5" r="69.5" />
        </clipPath>
      </defs>
      <g clipPath={`url(#${id}k)`}>
        <rect width="139" height="139" fill={`url(#${id}b)`} />
        <rect width="139" height="139" fill={`url(#${id}h)`} />
        <circle cx="29" cy="72" r="23" fill={`url(#${id}c)`} />
        <circle cx="111" cy="72" r="23" fill={`url(#${id}c)`} />
      </g>
      {children}
    </svg>
  );
}

const eyes = (
  <g fill="#642413">
    <ellipse cx="50" cy="58.5" rx="8" ry="9.3" />
    <ellipse cx="88.5" cy="58.5" rx="8" ry="9.3" />
  </g>
);

const happy = (
  <Face id="happy">
    {eyes}
    <path d="M45.5 80 H93 C93 104 84 115.5 69.5 115.5 S45.5 104 45.5 80Z" fill="#642413" />
    <path d="M53.5 109.5 C56 94 83 94 85.5 109.5 Q79 115.5 69.5 115.5 T53.5 109.5Z" fill="#fe5955" />
  </Face>
);

const fine = (
  <Face id="fine">
    {eyes}
    <path d="M49.5 81 C54 101.5 85 101.5 89.5 81" fill="none" stroke="#642413" strokeWidth="9.5" strokeLinecap="round" />
  </Face>
);

const bad = (
  <Face id="bad">
    <g fill="none" stroke="#642413" strokeWidth="9" strokeLinecap="round" strokeLinejoin="round">
      <path d="M42 49.5 L55 58.5 L42 68.5" />
      <path d="M98 49.5 L85 58.5 L98 68.5" />
    </g>
    <path d="M58 79 H81 Q97 79 97 92 Q97 101 88 106 H51 Q42 101 42 92 Q42 79 58 79Z" fill="#642413" />
    <path d="M51 106 C56 89.5 83 89.5 88 106Z" fill="#fe5955" />
    <path d="M117.5 32 C124 41 130 46 130 52 A7.5 7.5 0 0 1 114.5 52 C114.5 46 116 40 117.5 32Z" fill="#63e9f5" />
  </Face>
);

function Feeling({ face, label }) {
  return (
    <div className="flex flex-col items-center">
      {face}
      <div className="mt-[29px] h-[40px] text-[32.2px] leading-[40px] whitespace-nowrap text-[#666]">{label}</div>
    </div>
  );
}

/* ---------- page ---------- */

export default function App() {
  return (
    <main className="h-[4096px] w-[891px] overflow-hidden bg-white font-['Roboto',sans-serif] text-[#666]">
      <RouteMap />

      <section>
        <div className="mt-[62px] flex h-[48px] gap-[16px] pl-[57px] text-[35.5px] leading-[48px] font-bold whitespace-nowrap">
          <span>2025-07-09 10:26</span>
          <span>Corrida</span>
        </div>
        <div className="mt-[53px] h-[120px] text-center text-[108px] leading-[120px] text-[#333]">10.01</div>
        <div className="mt-[3px] h-[40px] text-center text-[34.6px] leading-[40px] text-[#333]">km</div>
        <div className="mt-[31px] grid grid-cols-[280.5px_280.5px_280.5px] pl-[24.5px]">
          <Stat value={"06'48\""} label="Ritmo médio" />
          <Stat value="01:08:07" label="Tempo usado" />
          <Stat value="964.0" label="Quilocaloria" tone="text-[#333]" />
        </div>
        <div className="mt-[85px] grid grid-cols-[280.5px_280.5px_280.5px] pl-[24.5px]">
          <Stat value="10582" label="Passos" unit="(step)" />
          <Stat value="155" label="Cadência média" unit="(step/min)" />
          <Stat value="94" label="Passada média" unit="(cm)" />
        </div>
      </section>

      <section className="mt-[99px]">
        <SectionTitle icon={roadIcon}>ritmo</SectionTitle>
        <div className="mt-[31px] flex h-[40px] pl-[67.5px] text-[31.9px] leading-[40px]">
          <span className="w-[85.5px]">km</span>
          <span>Ritmo</span>
        </div>
        {SPLITS.map(([km, pace, note], i) => (
          <SplitRow key={km} km={km} pace={pace} note={note} first={i === 0} />
        ))}
      </section>

      <section className="mt-[109px]">
        <SectionTitle icon={shoeIcon}>Cadência</SectionTitle>
        <div className="mt-[34.6px] grid grid-cols-2 pr-[22.5px] pl-[22.5px] text-center">
          <div>
            <div className="h-[70px] text-[59.4px] leading-[70px] text-[#333]">338</div>
            <div className="mt-[19px] h-[40px] text-[32.2px] leading-[40px]">Cadência máxima</div>
          </div>
          <div>
            <div className="h-[70px] text-[59.4px] leading-[70px] text-[#333]">155</div>
            <div className="mt-[19px] h-[40px] text-[32.2px] leading-[40px]">Cadência média</div>
          </div>
        </div>
        <div className="mt-[28.8px] h-[36px] pl-[51.5px] text-[27.4px] leading-[36px]">Cadência/min</div>
        <CadenceChart />
      </section>

      <section className="mt-[97.5px]">
        <SectionTitle icon={smileIcon}>Experiência de treino</SectionTitle>
        <div className="mt-[49px] grid grid-cols-[272px_272px_272px] pl-[37px]">
          <Feeling face={happy} label="Excelente" />
          <Feeling face={fine} label="Nada mal" />
          <Feeling face={bad} label="Ruim" />
        </div>
      </section>
    </main>
  );
}
